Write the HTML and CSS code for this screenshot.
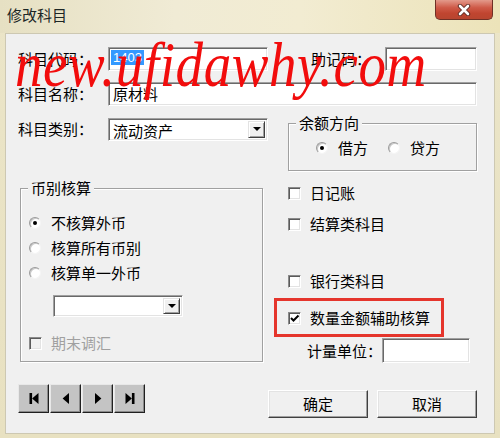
FILE: index.html
```html
<!DOCTYPE html>
<html lang="zh-CN">
<head>
  <meta charset="UTF-8" />
  <title>修改科目</title>
  <link rel="stylesheet" href="styles.css">
</head>
<body>
  <div class="window">
    <div class="titlebar">
      <span class="title">修改科目</span>
      <span class="close">
        <svg width="14" height="12" viewBox="0 0 14 12">
          <path d="M3 2 L11 10 M11 2 L3 10" stroke="#5a2a22" stroke-width="4.4" stroke-linecap="round"/>
          <path d="M3 2 L11 10 M11 2 L3 10" stroke="#fff" stroke-width="2.6" stroke-linecap="round"/>
        </svg>
      </span>
    </div>

    <div class="client">
      <div class="row">
        <span class="lbl">科目代码：</span>
        <span class="edit code"><span class="hl">1403</span></span>
        <span class="lbl mnemonic">助记码：</span>
        <span class="edit short"></span>
      </div>
      <div class="row row-gap">
        <span class="lbl">科目名称：</span>
        <span class="edit wide">原材料</span>
      </div>

      <div class="lower">
        <div class="col-left">
          <div class="row combo-row">
            <span class="lbl">科目类别：</span>
            <span class="combo cat">流动资产<span class="drop"><i class="arrow"></i></span></span>
          </div>

          <div class="group currency">
            <span class="group-title">币别核算</span>
            <div class="opt first"><i class="radio on"></i>不核算外币</div>
            <div class="opt"><i class="radio"></i>核算所有币别</div>
            <div class="opt"><i class="radio"></i>核算单一外币</div>
            <span class="combo cur"><span class="drop"><i class="arrow"></i></span></span>
            <div class="opt disabled"><i class="check off"></i>期末调汇</div>
          </div>
        </div>

        <div class="col-right">
          <div class="group balance">
            <span class="group-title">余额方向</span>
            <div class="radios">
              <span class="opt"><i class="radio on"></i>借方</span>
              <span class="opt"><i class="radio"></i>贷方</span>
            </div>
          </div>
          <div class="opt chk journal"><i class="check"></i>日记账</div>
          <div class="opt chk settle"><i class="check"></i>结算类科目</div>
          <div class="opt chk bank"><i class="check"></i>银行类科目</div>
          <div class="mark">
            <div class="opt"><i class="check">
              <svg width="11" height="11" viewBox="0 0 11 11"><path d="M2 5 L4.5 7.5 L9.5 2.5" fill="none" stroke="#000" stroke-width="2"/></svg>
            </i>数量金额辅助核算</div>
          </div>
          <div class="row unit">
            <span class="lbl unit-lbl">计量单位：</span>
            <span class="edit unit-edit"></span>
          </div>
        </div>
      </div>

      <div class="footer">
        <div class="nav">
          <span class="nav-btn"><svg width="12" height="13" viewBox="0 0 12 13"><rect x="1.5" y="1" width="2.6" height="11"/><polygon points="10.5,1 4.1,6.5 10.5,12"/></svg></span>
          <span class="nav-btn"><svg width="12" height="13" viewBox="0 0 12 13"><polygon points="9,1 2.6,6.5 9,12"/></svg></span>
          <span class="nav-btn"><svg width="12" height="13" viewBox="0 0 12 13"><polygon points="3,1 9.4,6.5 3,12"/></svg></span>
          <span class="nav-btn"><svg width="12" height="13" viewBox="0 0 12 13"><polygon points="1.5,1 7.9,6.5 1.5,12"/><rect x="7.9" y="1" width="2.6" height="11"/></svg></span>
        </div>
        <div class="actions">
          <span class="btn">确定</span>
          <span class="btn">取消</span>
        </div>
      </div>
    </div>

    <div class="watermark">new.ufidawhy.com</div>
  </div>
</body>
</html>
```

FILE: styles.css
```css
* {
  box-sizing: border-box;
}
body {
  margin: 0;
  width: 500px;
  height: 438px;
  overflow: hidden;
  font-family: "Noto Sans CJK SC", "Noto Sans", sans-serif;
  font-size: 15px;
  color: #000;
}
.window {
  position: relative;
  width: 500px;
  height: 438px;
  background: linear-gradient(180deg, #ebe5c8 0%, #e8e1c1 100%);
}
.titlebar {
  height: 33px;
  display: flex;
  justify-content: space-between;
  align-items: flex-start;
  background: linear-gradient(90deg, #e6e0c3 0%, #f0ebd5 35%, #f2ecd2 60%, #ece3b9 100%);
}
.title {
  margin: 5px 0 0 7px;
  line-height: 20px;
  color: #1c2626;
}
.close {
  width: 58px;
  height: 20px;
  margin-right: 7px;
  border: 1px solid #6e3026;
  border-top: none;
  border-radius: 0 0 5px 5px;
  background: linear-gradient(#e39a8b 0%, #cf5a48 40%, #c04530 70%, #b8452f 100%);
  display: flex;
  align-items: center;
  justify-content: center;
}
.client {
  margin-left: 5px;
  width: 490px;
  height: 401px;
  border: 1px solid #cdc8b2;
  background: #f0f0f0;
  padding: 13px 0 0 12px;
}

/* rows and edits */
.row {
  display: flex;
  align-items: center;
  height: 24px;
}
.row-gap {
  margin-top: 11px;
}
.lbl {
  width: 90px;
  line-height: 20px;
  white-space: nowrap;
}
.mnemonic {
  width: 74px;
  margin-left: 43px;
}
.edit {
  display: block;
  height: 24px;
  background: #fff;
  border: 1px solid;
  border-color: #a0a0a0 #fff #fff #a0a0a0;
  box-shadow: inset 1px 1px 0 #696969, inset -1px -1px 0 #e3e3e3;
  padding: 0 4px;
  line-height: 22px;
}
.code {
  width: 160px;
  padding-left: 2px;
}
.hl {
  display: inline-block;
  margin-top: 2px;
  padding: 0 2px;
  height: 15px;
  line-height: 15px;
  background: #3399ff;
  color: #fff;
  font-family: "Liberation Sans", sans-serif;
  font-size: 13px;
  vertical-align: top;
}
.short {
  width: 92px;
}
.wide {
  width: 369px;
}

/* combo boxes */
.combo {
  display: flex;
  height: 23px;
  background: #fff;
  border: 1px solid;
  border-color: #a0a0a0 #fff #fff #a0a0a0;
  box-shadow: inset 1px 1px 0 #696969, inset -1px -1px 0 #e3e3e3;
  padding: 2px 2px 2px 4px;
  line-height: 19px;
}
.cat {
  width: 160px;
}
.cur {
  width: 130px;
  height: 22px;
  margin: 12px 0 0 32px;
}
.drop {
  width: 17px;
  height: 100%;
  margin-left: auto;
  background: #f0f0f0;
  border: 1px solid;
  border-color: #e3e3e3 #404040 #404040 #e3e3e3;
  box-shadow: inset 1px 1px 0 #fff, inset -1px -1px 0 #a0a0a0;
  display: flex;
  align-items: center;
  justify-content: center;
}
.arrow {
  width: 0;
  height: 0;
  border-left: 4px solid transparent;
  border-right: 4px solid transparent;
  border-top: 4px solid #000;
}

/* group boxes */
.lower {
  display: grid;
  grid-template-columns: 256px 204px;
  margin-top: 11px;
}
.group {
  border: 1px solid #a0a0a0;
  box-shadow: inset 1px 1px 0 #fff, 1px 1px 0 #fff;
}
.group-title {
  display: block;
  width: fit-content;
  margin: -11px 0 0 7px;
  padding: 0 3px;
  line-height: 20px;
  background: #f0f0f0;
}
.currency {
  width: 243px;
  height: 174px;
  margin: 47px 0 0 2px;
}
.balance {
  width: 189px;
  height: 48px;
  margin: 6px 0 0 14px;
}

/* radios and checks */
.opt {
  display: flex;
  align-items: center;
  height: 20px;
  line-height: 20px;
  white-space: nowrap;
}
.currency .opt {
  margin: 5px 0 0 8px;
}
.currency .first {
  margin-top: 15px;
}
.currency .disabled {
  margin-top: 16px;
  color: #a0a0a0;
}
.radio {
  width: 12px;
  height: 12px;
  margin-right: 10px;
  border-radius: 50%;
  background: #fff;
  border: 1px solid;
  border-color: #9a9a9a #f4f4f4 #f4f4f4 #9a9a9a;
  box-shadow: inset 1px 1px 0 #c8c8c8;
  display: flex;
  align-items: center;
  justify-content: center;
}
.radio.on::after {
  content: "";
  width: 4px;
  height: 4px;
  border-radius: 50%;
  background: #000;
}
.radios {
  display: flex;
  margin: 5px 0 0 27px;
  gap: 20px;
}
.check {
  width: 13px;
  height: 13px;
  margin-right: 9px;
  background: #fff;
  border: 1px solid;
  border-color: #8a8a8a #fff #fff #8a8a8a;
  box-shadow: inset 1px 1px 0 #5a5a5a, inset -1px -1px 0 #e3e3e3;
  display: flex;
  align-items: center;
  justify-content: center;
}
.check.off {
  background: #f0f0f0;
}
.chk {
  margin-left: 14px;
}
.journal {
  margin-top: 12px;
}
.settle {
  margin-top: 11px;
}
.bank {
  margin-top: 37px;
}
.mark {
  width: 170px;
  height: 39px;
  margin-top: 7px;
  border: 3px solid #e5352c;
  padding: 7px 0 0 11px;
}
.unit {
  height: 25px;
  margin: 1px 0 0 33px;
}
.unit-lbl {
  width: 75px;
}
.unit-edit {
  width: 88px;
  height: 25px;
}

/* footer buttons */
.footer {
  display: flex;
  align-items: flex-start;
  margin-top: 21px;
}
.nav {
  display: flex;
  gap: 1px;
}
.nav-btn {
  width: 31px;
  height: 29px;
  background: #c4c4c4;
  border: 1px solid;
  border-color: #e8e8e8 #202020 #202020 #e8e8e8;
  box-shadow: inset -1px -1px 0 #8a8a8a;
  display: flex;
  align-items: center;
  justify-content: center;
}
.actions {
  display: flex;
  gap: 9px;
  margin: 6px 0 0 123px;
}
.btn {
  width: 100px;
  height: 28px;
  background: #f0f0f0;
  border: 1px solid;
  border-color: #fff #404040 #404040 #fff;
  box-shadow: inset -1px -1px 0 #a0a0a0, inset 1px 1px 0 #e3e3e3;
  text-align: center;
  line-height: 25px;
}

/* watermark over the dialog */
.watermark {
  position: absolute;
  left: 15px;
  top: 27px;
  font-family: "Liberation Serif", serif;
  font-style: italic;
  font-size: 55px;
  line-height: 66px;
  letter-spacing: 0.6px;
  color: #f20c0c;
  transform: scaleY(1.15);
  transform-origin: left top;
  pointer-events: none;
}
```
